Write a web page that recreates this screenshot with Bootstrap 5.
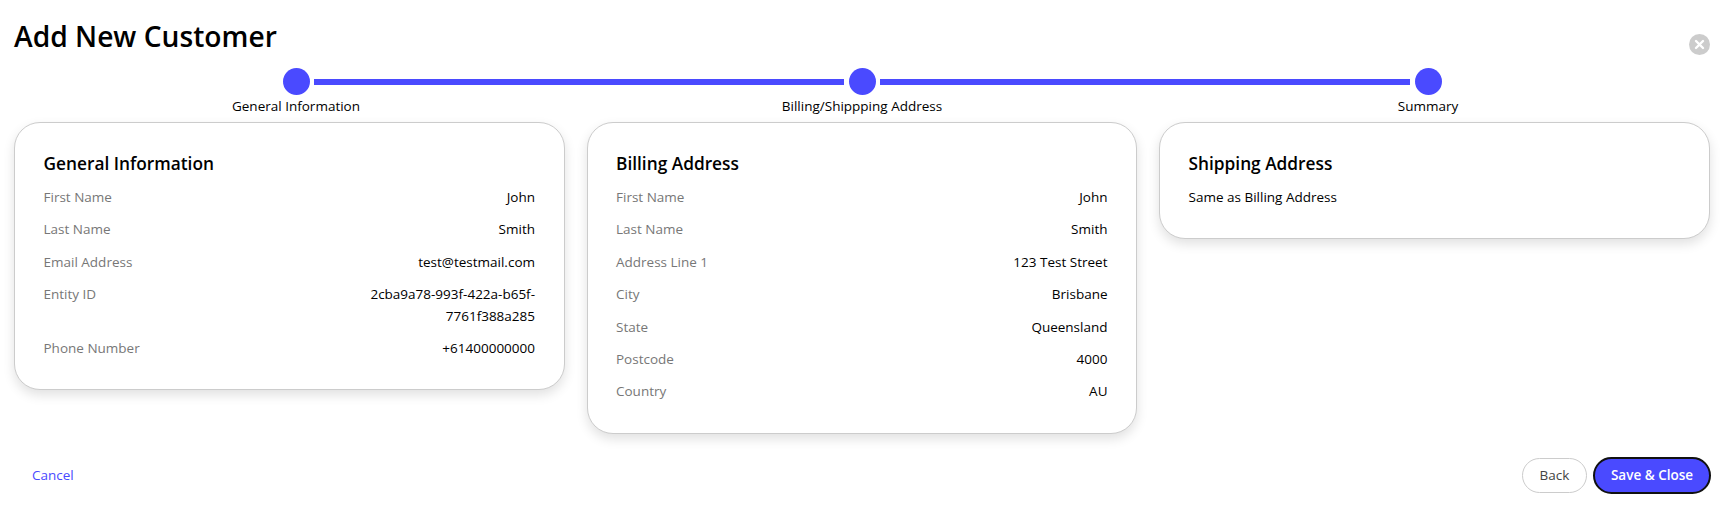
<!DOCTYPE html>
<html><head><meta charset="utf-8">
<link href="https://cdn.jsdelivr.net/npm/bootstrap@5.3.0/dist/css/bootstrap.min.css" rel="stylesheet">
<style>
html,body{background:#fff;color:#000;font-family:"Open Sans",sans-serif;font-size:13.5px;line-height:21.6px;height:514px;overflow:hidden}
.shell{padding:0 12px 0 14px;width:1723px}
.ttl{font-size:28.2px;font-weight:550;line-height:38px;margin:0;padding-top:17px}
.closer{right:13px;top:34px;width:21px;height:21px}
.stepper{height:67px;padding-top:13px;margin-left:-1px}
.stp{width:566px;flex:0 0 auto;position:relative;text-align:center}
.dot{display:block;width:27px;height:27px;border-radius:50%;background:#4a4aff;margin:0 auto 1px}
.lnk{position:absolute;height:6px;background:#4a4aff;top:11px;left:calc(50% + 18px);width:530px}
.cards{gap:22px;align-items:flex-start}
.sum-card{border:1px solid #ccc;border-radius:26px;box-shadow:0 5px 12px rgba(0,0,0,.12);padding:28.5px 28.5px 18.8px 28.5px;width:550.5px;background:#fff}
.sum-card h5{font-size:17.3px;font-weight:600;margin:0 0 11.5px;line-height:24px}
.rw{display:flex;justify-content:space-between;margin-bottom:10.8px}
.rw span:first-child{color:#777}
.rw span:last-child{text-align:right;max-width:175px}
.foot{position:absolute;top:457px;left:32px;right:12px;height:37px}
.cancel{color:#4a4aff;text-decoration:none}
.bk{border:1px solid #ccc;border-radius:18px;background:#fff;color:#444;height:35px;width:65px;padding:0}
.sv{border:2px solid #111;border-radius:19px;background:#4a4aff;color:#fff;height:37px;width:118px;font-weight:550;padding:0}
.btns{gap:6px}
</style></head><body>
<div class="shell position-relative">
<h1 class="ttl">Add New Customer</h1>
<svg class="closer position-absolute" viewBox="0 0 21 21"><circle cx="10.5" cy="10.5" r="10.5" fill="#ccc"/><path d="M7 7l7 7M14 7l-7 7" stroke="#fff" stroke-width="2.4" stroke-linecap="round"/></svg>
<div class="stepper d-flex">
<div class="stp"><span class="dot"></span><span class="lnk"></span>General Information</div>
<div class="stp"><span class="dot"></span><span class="lnk"></span>Billing/Shippping Address</div>
<div class="stp"><span class="dot"></span>Summary</div>
</div>
<div class="cards d-flex">
<div class="sum-card"><h5>General Information</h5>
<div class="rw"><span>First Name</span><span>John</span></div>
<div class="rw"><span>Last Name</span><span>Smith</span></div>
<div class="rw"><span>Email Address</span><span>test@testmail.com</span></div>
<div class="rw"><span>Entity ID</span><span>2cba9a78-993f-422a-b65f-7761f388a285</span></div>
<div class="rw"><span>Phone Number</span><span>+61400000000</span></div>
</div>
<div class="sum-card"><h5>Billing Address</h5>
<div class="rw"><span>First Name</span><span>John</span></div>
<div class="rw"><span>Last Name</span><span>Smith</span></div>
<div class="rw"><span>Address Line 1</span><span>123 Test Street</span></div>
<div class="rw"><span>City</span><span>Brisbane</span></div>
<div class="rw"><span>State</span><span>Queensland</span></div>
<div class="rw"><span>Postcode</span><span>4000</span></div>
<div class="rw"><span>Country</span><span>AU</span></div>
</div>
<div class="sum-card"><h5>Shipping Address</h5>
<div class="rw"><span class="text-black">Same as Billing Address</span></div>
</div>
</div>
</div>
<div class="foot d-flex justify-content-between align-items-center">
<a class="cancel" href="#">Cancel</a>
<div class="btns d-flex align-items-center"><button class="bk">Back</button><button class="sv">Save &amp; Close</button></div>
</div>
<script src="https://cdn.jsdelivr.net/npm/bootstrap@5.3.0/dist/js/bootstrap.bundle.min.js"></script>
</body></html>
